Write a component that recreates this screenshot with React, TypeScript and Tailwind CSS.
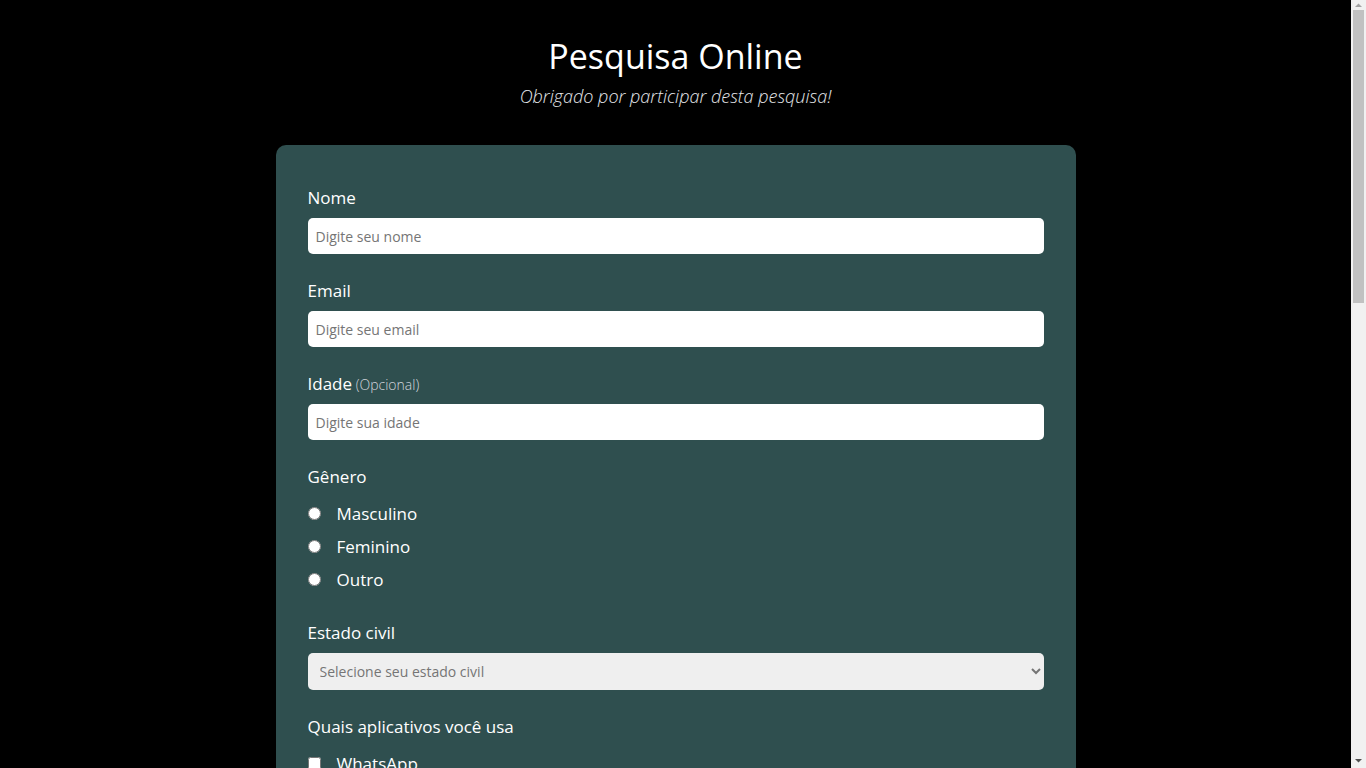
import React from "react";

const font = { fontFamily: '"Open Sans", "Noto Sans", sans-serif' };

function Field({ label, extra, placeholder }: { label: string; extra?: string; placeholder: string }) {
  return (
    <div className="mb-6">
      <label className="block h-[25px] text-[17px] leading-[25px] text-white mb-2">
        {label}
        {extra && <span className="text-[14px] leading-none text-gray-300 font-light"> {extra}</span>}
      </label>
      <input
        className="block w-full h-9 rounded-[5px] bg-white px-2 text-[14px] text-gray-800 placeholder:text-[#757575] outline-none"
        placeholder={placeholder}
      />
    </div>
  );
}

function FakeScrollbar() {
  return (
    <div className="fixed top-0 right-0 h-screen w-[15px] bg-[#f1f1f1] flex flex-col items-center">
      <svg width="15" height="10" viewBox="0 0 15 10" className="shrink-0">
        <polygon points="4,7 11,7 7.5,3.5" fill="#a3a3a3" />
      </svg>
      <div className="w-[11px] h-[293px] bg-[#c1c1c1]" />
      <div className="flex-1" />
      <svg width="15" height="12" viewBox="0 0 15 12" className="shrink-0">
        <polygon points="4,3 11,3 7.5,6.5" fill="#505050" />
      </svg>
    </div>
  );
}

export default function App() {
  const apps = ["WhatsApp", "Instagram", "Facebook", "Twitter", "TikTok", "Telegram"];
  return (
    <div className="min-h-screen bg-black text-white pr-[15px]" style={font}>
      <div className="pb-12">
        <header className="pt-[30px] pb-[36px] text-center">
          <h1 className="text-[34px] leading-[52px] font-normal">Pesquisa Online</h1>
          <p className="mt-[1px] text-[18px] leading-[26px] italic font-light text-gray-200">Obrigado por participar desta pesquisa!</p>
        </header>
        <main className="mx-auto w-[800px] rounded-[10px] bg-[#2f4f4f] px-8 pt-10 pb-10">
          <Field label="Nome" placeholder="Digite seu nome" />
          <Field label="Email" placeholder="Digite seu email" />
          <Field label="Idade" extra="(Opcional)" placeholder="Digite sua idade" />

          <div className="mb-6">
            <p className="text-[17px] leading-[25px] mb-[8px]">Gênero</p>
            {["Masculino", "Feminino", "Outro"].map((g) => (
              <label key={g} className="flex items-center h-[33px] text-[17px]">
                <input type="radio" name="genero" className="w-[13px] h-[13px] ml-0 mr-4" />
                {g}
              </label>
            ))}
          </div>

          <div className="mb-6">
            <p className="text-[17px] leading-[25px] mb-2">Estado civil</p>
            <select className="block w-full h-[37px] rounded-[5px] bg-[#efefef] px-2 text-[14px] text-[#757575] outline-none">
              <option>Selecione seu estado civil</option>
              <option>Solteiro(a)</option>
              <option>Casado(a)</option>
              <option>Divorciado(a)</option>
              <option>Viúvo(a)</option>
            </select>
          </div>

          <div className="mb-6">
            <p className="text-[17px] leading-[25px] mb-[8px]">Quais aplicativos você usa</p>
            {apps.map((a) => (
              <label key={a} className="flex items-center h-[33px] text-[17px]">
                <input type="checkbox" className="w-[13px] h-[13px] ml-0 mr-4" />
                {a}
              </label>
            ))}
          </div>

          <div className="mb-6">
            <p className="text-[17px] leading-[25px] mb-[8px]">Com que frequência você usa a internet?</p>
            {["Todos os dias", "Algumas vezes por semana", "Raramente"].map((g) => (
              <label key={g} className="flex items-center h-[33px] text-[17px]">
                <input type="radio" name="freq" className="w-[13px] h-[13px] ml-0 mr-4" />
                {g}
              </label>
            ))}
          </div>

          <div className="mb-6">
            <p className="text-[17px] leading-[25px] mb-2">Comentários</p>
            <textarea
              className="block w-full h-[160px] rounded-[5px] bg-white p-2 text-[14px] text-gray-800 placeholder:text-[#757575] outline-none resize-y"
              placeholder="Deixe seu comentário"
            />
          </div>

          <button className="w-full h-[44px] rounded-[5px] bg-[#1e3535] text-white text-[17px]">Enviar</button>
        </main>
      </div>
      <FakeScrollbar />
    </div>
  );
}
